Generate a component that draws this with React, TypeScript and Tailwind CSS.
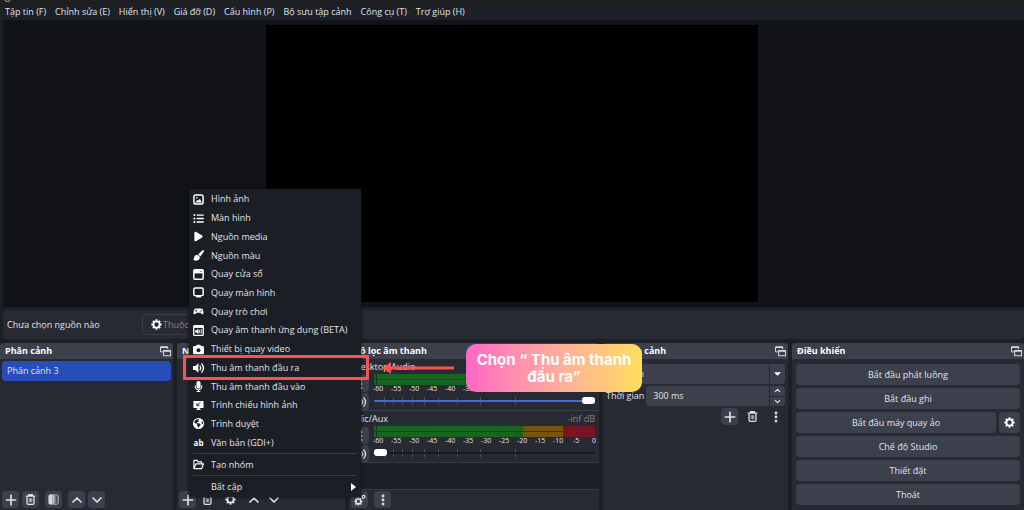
import type { ReactNode } from "react";
import clsx from "clsx";
import { FaCamera, FaListUl, FaMicrophone, FaPlay, FaEarthAmericas } from "react-icons/fa6";
import { ChevronDown, ChevronUp, EllipsisVertical, Plus } from "lucide-react";

const MENUS = [
  "Tập tin (F)",
  "Chỉnh sửa (E)",
  "Hiển thị (V)",
  "Giá đỡ (D)",
  "Cấu hình (P)",
  "Bộ sưu tập cảnh",
  "Công cụ (T)",
  "Trợ giúp (H)",
];

const SOURCES: { label: string; icon: ReactNode; marked?: boolean }[] = [
  { label: "Hình ảnh", icon: <ImageIcon /> },
  { label: "Màn hình", icon: <FaListUl /> },
  { label: "Nguồn media", icon: <FaPlay /> },
  { label: "Nguồn màu", icon: <BrushIcon /> },
  { label: "Quay cửa sổ", icon: <WindowIcon /> },
  { label: "Quay màn hình", icon: <DisplayIcon /> },
  { label: "Quay trò chơi", icon: <GamepadIcon /> },
  { label: "Quay âm thanh ứng dụng (BETA)", icon: <AppAudioIcon /> },
  { label: "Thiết bị quay video", icon: <FaCamera /> },
  { label: "Thu âm thanh đầu ra", icon: <OutputIcon />, marked: true },
  { label: "Thu âm thanh đầu vào", icon: <FaMicrophone /> },
  { label: "Trình chiếu hình ảnh", icon: <SlidesIcon /> },
  { label: "Trình duyệt", icon: <FaEarthAmericas /> },
  { label: "Văn bản (GDI+)", icon: <span className="text-[8px] font-bold">ab</span> },
];

const DB_MARKS = [-60, -55, -50, -45, -40, -35, -30, -25, -20, -15, -10, -5, 0];
const SLIDER_TICKS = [4.5, 8.6, 12.7, 17.2, 22.6, 29, 37.5, 48, 64];

function ImageIcon() {
  return (
    <svg viewBox="0 0 12 12" className="size-[11px]" fill="none" stroke="currentColor">
      <rect x="1" y="1" width="10" height="10" rx="2" strokeWidth="1.6" />
      <path d="M2.6 9.2 4.6 6.2 5.8 7.4 7.4 5.2 9.6 9.2Z" fill="currentColor" stroke="none" />
      <circle cx="4.2" cy="4.2" r="0.9" fill="currentColor" stroke="none" />
    </svg>
  );
}

function BrushIcon() {
  return (
    <svg viewBox="0 0 12 12" className="size-[11px]" fill="currentColor">
      <path d="M11.6.4q.7.7.1 1.6L8 7.2 5.6 4.8 10 .5q.9-.7 1.6-.1Z" />
      <path d="M4.9 5.1 7.5 7.7Q7.6 11.6 3.4 11.6 1 11.6.2 10.2q.8 0 .9-1.6Q1.3 5.4 4.9 5.1Z" />
    </svg>
  );
}

function WindowIcon() {
  return (
    <svg viewBox="0 0 12 12" className="size-[11px]" fill="none" stroke="currentColor">
      <rect x="0.9" y="0.9" width="10.2" height="10.2" rx="1" strokeWidth="1.6" />
      <path d="M1 1h10v3.8H1z" fill="currentColor" stroke="none" />
      <path d="M7.4 2.6h.9M9.2 2.6h.9" stroke="#1c1e25" strokeWidth="0.9" />
    </svg>
  );
}

function DisplayIcon() {
  return (
    <svg viewBox="0 0 12 12" className="size-[11px]" fill="none" stroke="currentColor">
      <rect x="0.9" y="1.2" width="10.2" height="8.2" rx="1.6" strokeWidth="1.6" />
      <path d="M3.2 10.6h5.6" strokeWidth="1.6" />
    </svg>
  );
}

function GamepadIcon() {
  return (
    <svg viewBox="0 0 12 8" className="h-[7px] w-[11px]">
      <path
        d="M3 .6h6Q11 .6 11.5 3.4 12.2 7.2 10.6 7.2 9.6 7.2 8.4 5.4H3.6Q2.4 7.2 1.4 7.2-.2 7.2.5 3.4 1 .6 3 .6Z"
        fill="currentColor"
      />
      <path d="M2.2 3.1h2.4M3.4 1.9v2.4" stroke="#1c1e25" strokeWidth="0.8" />
      <circle cx="8" cy="3.7" r="0.6" fill="#1c1e25" />
      <circle cx="9.4" cy="2.5" r="0.6" fill="#1c1e25" />
    </svg>
  );
}

function AppAudioIcon() {
  return (
    <svg viewBox="0 0 12 12" className="size-[11px]" fill="none" stroke="currentColor">
      <rect x="0.8" y="0.8" width="10.4" height="10.4" rx="0.6" strokeWidth="1.4" />
      <path d="M1 1h10v2.2H1z" fill="currentColor" stroke="none" />
      <path d="M2.4 5.8h1.4L6 4.2v5.6L3.8 8.2H2.4z" fill="currentColor" stroke="none" />
      <path d="M7.2 5.4v3.2M9 4.6v4.8" strokeWidth="1" />
    </svg>
  );
}

function OutputIcon() {
  return (
    <svg viewBox="0 0 12 12" className="size-3 shrink-0" fill="none" stroke="currentColor" strokeWidth="1.3">
      <path d="M0 4h2.2L5.4 1.2v9.6L2.2 8H0z" fill="currentColor" stroke="none" />
      <path d="M7 4q1.4 2 0 4M8.8 1.8q3.4 4.2 0 8.4" strokeLinecap="round" />
    </svg>
  );
}

function SlidesIcon() {
  return (
    <svg viewBox="0 0 12 12" className="size-[11px]" fill="currentColor">
      <path d="M.5 1h11v7.6H7l1.8 2.4H3.2L5 8.6H.5z" />
      <path d="M4.2 3.4v2.8h2.8M4.4 6 8.2 2.6" stroke="#1c1e25" strokeWidth="1" fill="none" />
    </svg>
  );
}

function FolderIcon() {
  return (
    <svg viewBox="0 0 12 12" className="size-[11px]" fill="none" stroke="#fff" strokeWidth="1.3" strokeLinejoin="round">
      <path d="M1 10.4V1.6h3.4l1.2 1.6h3.8v2" />
      <path d="M1 10.4 3.2 5.4h8.2L9.4 10.4Z" />
    </svg>
  );
}

function GearIcon({ className = "size-[11px]" }: { className?: string }) {
  return (
    <svg viewBox="0 0 12 12" className={className} fill="none" stroke="currentColor">
      <circle cx="6" cy="6" r="3.4" strokeWidth="2" />
      <path
        d="M6 .4v2M6 9.6v2M.4 6h2M9.6 6h2M2 2l1.5 1.5M8.5 8.5 10 10M10 2 8.5 3.5M3.5 8.5 2 10"
        strokeWidth="2"
      />
    </svg>
  );
}

function GearsIcon() {
  return (
    <svg viewBox="0 0 12 12" className="size-3" fill="none" stroke="currentColor">
      <circle cx="4.4" cy="7.4" r="2.4" strokeWidth="1.6" />
      <path
        d="M4.4 3.2v1.6M4.4 10v1.6M.2 7.4h1.6M7 7.4h1.6M1.4 4.4l1.2 1.2M6.2 9.2l1.2 1.2M7.4 4.4 6.2 5.6M2.6 9.2 1.4 10.4"
        strokeWidth="1.4"
      />
      <circle cx="9.6" cy="2.8" r="1.4" strokeWidth="1.2" />
    </svg>
  );
}

function PopOutIcon() {
  return (
    <svg viewBox="0 0 12 12" className="size-[11px]" fill="none" stroke="#e4e5e8">
      <path d="M3.4 6.4H.6V1h7.8v2.4" />
      <path d="M.6 1.4h7.8" strokeWidth="1.4" />
      <rect x="4" y="5" width="7.4" height="5.6" />
      <path d="M4 5.4h7.4" strokeWidth="1.6" />
    </svg>
  );
}

function TrashIcon() {
  return (
    <svg viewBox="0 0 12 12" className="size-[11px]" fill="none" stroke="currentColor">
      <path d="M.8 2.4h10.4M4 2.2V.8h4v1.4" strokeWidth="1.4" />
      <path d="M2.2 2.6v7.2q0 1.4 1.4 1.4h4.8q1.4 0 1.4-1.4V2.6" strokeWidth="1.4" />
      <path d="M4.6 4.6v4.4M6 4.6v4.4M7.4 4.6v4.4" strokeWidth="0.8" />
    </svg>
  );
}

function FilterIcon() {
  return (
    <svg viewBox="0 0 12 12" className="size-[11px]">
      <defs>
        <linearGradient id="fade">
          <stop offset="0" stopColor="#d5d6da" />
          <stop offset="1" stopColor="#3c404d" />
        </linearGradient>
      </defs>
      <rect x="1" y="1" width="10" height="10" rx="1.4" fill="none" stroke="#d5d6da" />
      <path d="M1 1h4v10H1z" fill="#d5d6da" />
      <path d="M5 1.5h5v9H5z" fill="url(#fade)" />
    </svg>
  );
}

const PlusIcon = () => <Plus className="size-4" strokeWidth={2.5} />;
const UpIcon = () => <ChevronUp className="size-4" strokeWidth={2.5} />;
const DownIcon = () => <ChevronDown className="size-4" strokeWidth={2.5} />;
const DotsIcon = () => <EllipsisVertical className="size-[14px]" strokeWidth={3} />;

function ToolButton({ label, flat, children }: { label: string; flat?: boolean; children: ReactNode }) {
  return (
    <button
      type="button"
      aria-label={label}
      className={clsx(
        "flex size-[17px] shrink-0 items-center justify-center rounded-sm",
        !flat && "bg-[#3c404d]",
      )}
    >
      {children}
    </button>
  );
}

function Dock({ title, popOut = true, className, children }: {
  title: string;
  popOut?: boolean;
  className?: string;
  children: ReactNode;
}) {
  return (
    <section className={clsx("relative flex min-w-0 flex-col bg-[#272a33]", className)}>
      <header className="flex h-4 items-center justify-between rounded-t-sm bg-[#3c404d] pr-[2px] pl-[5px]">
        <h2 className="font-bold whitespace-nowrap text-white">{title}</h2>
        {popOut && (
          <button type="button" aria-label="Tách cửa sổ">
            <PopOutIcon />
          </button>
        )}
      </header>
      {children}
    </section>
  );
}

function MixerRow({ name, level, volume, full }: { name: string; level?: string; volume: number; full?: boolean }) {
  return (
    <div className="border-b border-[#3a3e49] pr-1 pl-[3px]">
      <div className="flex h-[15px] items-center justify-between pl-[2px]">
        <span>{name}</span>
        <span className="text-[#82858e]">{level}</span>
      </div>
      <div className="flex gap-[5px]">
        <div className="flex flex-col gap-px pt-px">
          <ToolButton label={`Tùy chọn ${name}`}>
            <DotsIcon />
          </ToolButton>
          <ToolButton label={`Tắt tiếng ${name}`}>
            <OutputIcon />
          </ToolButton>
        </div>
        <div className="min-w-0 flex-1">
          <div className="relative flex h-[11px] bg-[#272a33]">
            <span className="mr-px w-[2px] bg-[#17651f]" />
            <span className="w-[66%] bg-[#17651f]" />
            <span className="w-[18%] bg-[#785410]" />
            <span className="flex-1 bg-[#7b1322]" />
            <span className="absolute inset-x-0 top-[5px] h-px bg-[#2a3c30]" />
          </div>
          <div className="flex h-2 justify-between pr-px pl-1 text-[7px] leading-[8px]">
            {DB_MARKS.map((db) => (
              <span key={db} className="flex w-0 justify-center">
                {db}
              </span>
            ))}
          </div>
          <div className="relative flex h-4 items-center">
            {SLIDER_TICKS.map((tick) => (
              <span key={tick} className="absolute top-1 h-2 w-px bg-[#4c505c]" style={{ left: `${tick}%` }} />
            ))}
            <input
              type="range"
              aria-label={`Âm lượng ${name}`}
              defaultValue={volume}
              className={clsx(
                "relative h-2 w-full appearance-none bg-transparent",
                "[&::-webkit-slider-runnable-track]:h-[2px] [&::-webkit-slider-runnable-track]:rounded-full",
                "[&::-webkit-slider-thumb]:-mt-[3px] [&::-webkit-slider-thumb]:h-[7px] [&::-webkit-slider-thumb]:w-[13px]",
                "[&::-webkit-slider-thumb]:appearance-none [&::-webkit-slider-thumb]:rounded-[3px] [&::-webkit-slider-thumb]:bg-white",
                full
                  ? "[&::-webkit-slider-runnable-track]:bg-[#466bd9]"
                  : "[&::-webkit-slider-runnable-track]:bg-[#191b21]",
              )}
            />
          </div>
        </div>
      </div>
    </div>
  );
}

function SourceMenu() {
  return (
    <div
      role="menu"
      className="absolute bottom-[13px] left-3 z-10 w-[172px] bg-[#1c1e25] px-1 pt-px shadow-[0_0_3px_#0c0d10]"
    >
      <div className="flex h-[262px] flex-col">
        {SOURCES.map((s) => (
          <button key={s.label} type="button" role="menuitem" className="relative flex flex-1 items-center gap-[7px]">
            <span className="flex w-[11px] justify-center text-[11px] text-white">{s.icon}</span>
            <span className="whitespace-nowrap">{s.label}</span>
            {s.marked && (
              <span className="absolute -inset-y-[3px] -right-3 -left-[10px] border-[3px] border-[#f9524f]" />
            )}
          </button>
        ))}
      </div>
      <hr className="mt-px border-[#3a3d46]" />
      <button type="button" role="menuitem" className="flex h-[21px] w-full items-center gap-[7px]">
        <FolderIcon />
        Tạo nhóm
      </button>
      <hr className="border-[#3a3d46]" />
      <button type="button" role="menuitem" className="flex h-[21px] w-full items-center justify-between pr-px pl-[18px]">
        Bất cập
        <svg viewBox="0 0 5 8" className="h-2 w-[5px]">
          <path d="M0 0 5 4 0 8z" fill="#fff" />
        </svg>
      </button>
    </div>
  );
}

function ControlButton({ children }: { children: ReactNode }) {
  return (
    <button type="button" className="h-[21px] flex-1 rounded-sm bg-[#3c404d]">
      {children}
    </button>
  );
}

export default function App() {
  return (
    <div className="relative flex h-screen flex-col overflow-hidden bg-[#1d1f26] font-['Open_Sans','Noto_Sans',sans-serif] text-[9px] leading-3 text-[#e2e3e6]">
      <div className="h-1 overflow-hidden bg-[#1f1f20] pl-1">
        <div className="-mt-[5px] size-[7px] rounded-full border border-[#b5b5b5]" />
      </div>
      <nav className="flex h-4 items-center gap-[9px] bg-[#1c2027] pl-[5px]">
        {MENUS.map((m) => (
          <button key={m} type="button" className="whitespace-nowrap">
            {m}
          </button>
        ))}
      </nav>

      <main className="ml-[3px] flex min-h-0 flex-1 justify-center bg-[#111317] py-[5px] pr-[3px]">
        <div className="aspect-video h-full bg-black" />
      </main>

      <div className="mt-[3px] mb-1 ml-[3px] flex h-[29px] items-center rounded-sm bg-[#272a33] pl-1">
        <span className="w-[135px]">Chưa chọn nguồn nào</span>
        <button
          type="button"
          className="flex h-[21px] items-center gap-px rounded-sm border border-[#383c47] px-2 text-[#82858e]"
        >
          <GearIcon className="size-[11px] text-white" />
          Thuộc tính
        </button>
      </div>

      <div className="grid grid-cols-[173fr_168fr_250fr_185fr_232fr] gap-1">
        <Dock title="Phân cảnh">
          <ul className="flex-1 px-[2px] pt-[2px]">
            <li className="flex h-5 items-center rounded-sm bg-[#284cb8] pl-[5px]">Phân cảnh 3</li>
          </ul>
          <div className="flex items-center gap-[6px] px-[2px] pb-[2px]">
            <div className="flex gap-[3px]">
              <ToolButton label="Thêm cảnh"><PlusIcon /></ToolButton>
              <ToolButton label="Xóa cảnh"><TrashIcon /></ToolButton>
            </div>
            <ToolButton label="Bộ lọc cảnh"><FilterIcon /></ToolButton>
            <div className="flex gap-[3px]">
              <ToolButton label="Chuyển lên"><UpIcon /></ToolButton>
              <ToolButton label="Chuyển xuống"><DownIcon /></ToolButton>
            </div>
          </div>
        </Dock>

        <Dock title="Nguồn" popOut={false} className="z-10">
          <div className="mt-auto flex gap-[6px] px-[2px] pb-[2px]">
            <div className="flex gap-[3px]">
              <ToolButton label="Thêm nguồn"><PlusIcon /></ToolButton>
              <ToolButton label="Xóa nguồn" flat><TrashIcon /></ToolButton>
            </div>
            <ToolButton label="Thuộc tính nguồn" flat><GearIcon /></ToolButton>
            <div className="flex gap-[3px]">
              <ToolButton label="Nguồn lên" flat><UpIcon /></ToolButton>
              <ToolButton label="Nguồn xuống" flat><DownIcon /></ToolButton>
            </div>
          </div>
          <SourceMenu />
        </Dock>

        <Dock title="Bộ lọc âm thanh">
          <MixerRow name="Desktop Audio" volume={100} full />
          <MixerRow name="Mic/Aux" level="-inf dB" volume={0} />
          <div className="flex-1 border-b border-[#3a3e49] bg-[#1d1f26]" />
          <div className="flex gap-[6px] px-[2px] pt-px pb-[2px]">
            <ToolButton label="Thiết lập âm thanh"><GearsIcon /></ToolButton>
            <ToolButton label="Thêm tùy chọn"><DotsIcon /></ToolButton>
          </div>
        </Dock>

        <Dock title="Chuyển cảnh">
          <div className="flex flex-col gap-[2px] px-[3px] pt-[5px]">
            <div className="relative">
              <select
                aria-label="Chuyển cảnh"
                className="h-5 w-full appearance-none rounded-sm bg-[#3c404d] pl-[6px]"
              >
                <option>Mờ dần</option>
              </select>
              <span className="pointer-events-none absolute inset-y-0 right-0 flex w-4 items-center justify-center border-l border-[#272a33]">
                <svg viewBox="0 0 8 4" className="h-1 w-[7px]">
                  <path d="M0 0h8L4 4z" fill="#fff" />
                </svg>
              </span>
            </div>
            <div className="flex items-center gap-[2px]">
              <label htmlFor="duration" className="whitespace-nowrap">Thời gian</label>
              <div className="flex h-5 min-w-0 flex-1 rounded-sm bg-[#3c404d]">
                <input id="duration" type="text" defaultValue="300 ms" className="min-w-0 flex-1 pl-[7px]" />
                <div className="flex w-4 flex-col border-l border-[#272a33]">
                  <button type="button" aria-label="Tăng" className="flex flex-1 items-center justify-center border-b border-[#272a33]">
                    <ChevronUp className="size-[9px]" strokeWidth={3} />
                  </button>
                  <button type="button" aria-label="Giảm" className="flex flex-1 items-center justify-center">
                    <ChevronDown className="size-[9px]" strokeWidth={3} />
                  </button>
                </div>
              </div>
            </div>
            <div className="flex justify-end gap-[6px] pr-px">
              <ToolButton label="Thêm chuyển cảnh"><PlusIcon /></ToolButton>
              <ToolButton label="Xóa chuyển cảnh" flat><TrashIcon /></ToolButton>
              <ToolButton label="Tùy chọn chuyển cảnh" flat><DotsIcon /></ToolButton>
            </div>
          </div>
        </Dock>

        <Dock title="Điều khiển">
          <div className="flex flex-col gap-[3px] px-1 py-[5px]">
            <div className="flex"><ControlButton>Bắt đầu phát luồng</ControlButton></div>
            <div className="flex"><ControlButton>Bắt đầu ghi</ControlButton></div>
            <div className="flex gap-[3px]">
              <ControlButton>Bắt đầu máy quay ảo</ControlButton>
              <button
                type="button"
                aria-label="Cấu hình máy quay ảo"
                className="flex size-[21px] items-center justify-center rounded-sm bg-[#3c404d] text-white"
              >
                <GearIcon />
              </button>
            </div>
            <div className="flex"><ControlButton>Chế độ Studio</ControlButton></div>
            <div className="flex"><ControlButton>Thiết đặt</ControlButton></div>
            <div className="flex"><ControlButton>Thoát</ControlButton></div>
          </div>
        </Dock>
      </div>

      {/* Annotation over the mixer */}
      <div className="absolute bottom-[118px] left-[382px] z-20 flex items-center gap-3">
        <svg viewBox="0 0 72 12" className="h-3 w-[72px]">
          <path d="M0 6 9 0v4.5h63v3H9V12z" fill="#f9524f" />
        </svg>
        <p className="flex h-12 w-[176px] items-center justify-center rounded-[10px] bg-linear-to-r from-[#ff66c4] to-[#ffde59] text-center font-['Inter',sans-serif] text-[15px] leading-[17px] font-bold text-white">
          Chọn “ Thu âm thanh
          <br />
          đầu ra”
        </p>
      </div>
    </div>
  );
}
